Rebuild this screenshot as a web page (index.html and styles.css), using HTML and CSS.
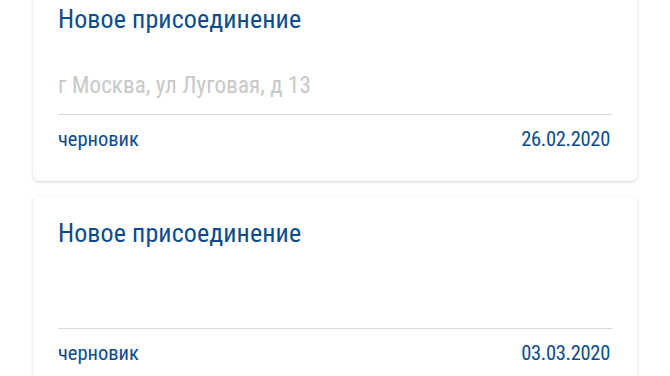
FILE: index.html
```html
<!DOCTYPE html>
<html>
<head>
    <meta charset="utf-8">
    <meta name="viewport" content="width=device-width, initial-scale=1">
    <title>Заявки</title>
    <link rel="stylesheet" href="styles.css">
</head>
<body>
    <div class="list">
        <div class="card">
            <p class="card-title">Новое присоединение</p>
            <p class="card-address">г Москва, ул Луговая, д 13</p>
            <div class="card-footer">
                <span class="status">черновик</span>
                <span class="date">26.02.2020</span>
            </div>
        </div>

        <div class="card">
            <p class="card-title">Новое присоединение</p>
            <p class="card-address"></p>
            <div class="card-footer">
                <span class="status">черновик</span>
                <span class="date">03.03.2020</span>
            </div>
        </div>
    </div>
</body>
</html>
```
FILE: styles.css
```css
body {
    margin: 0;
    background-color: white;
    font-family: "Roboto Condensed", Roboto, sans-serif;
    color: #0d4c8c;
}

.list {
    display: flex;
    flex-direction: column;
    gap: 15px;
    padding: 0 33px;
    margin-top: -18px;
}

.card {
    background-color: white;
    border-radius: 6px;
    box-shadow: 0 1px 3px rgba(0, 0, 0, 0.18);
    padding: 21px 25px 29px;
}

.card-title {
    margin: 0;
    font-size: 26px;
    line-height: 32px;
    letter-spacing: 0.1px;
}

.card-address {
    margin: 37px 0 0;
    min-height: 28px;
    font-size: 23px;
    line-height: 28px;
    letter-spacing: 0.1px;
    color: #c8c8c8;
    border-bottom: 1px solid #d9d9d9;
    padding-bottom: 14px;
}

.card-footer {
    display: flex;
    justify-content: space-between;
    margin-top: 11px;
    font-size: 20.5px;
    line-height: 26px;
}

.date {
    margin-right: 2px;
    letter-spacing: -0.3px;
}
```
